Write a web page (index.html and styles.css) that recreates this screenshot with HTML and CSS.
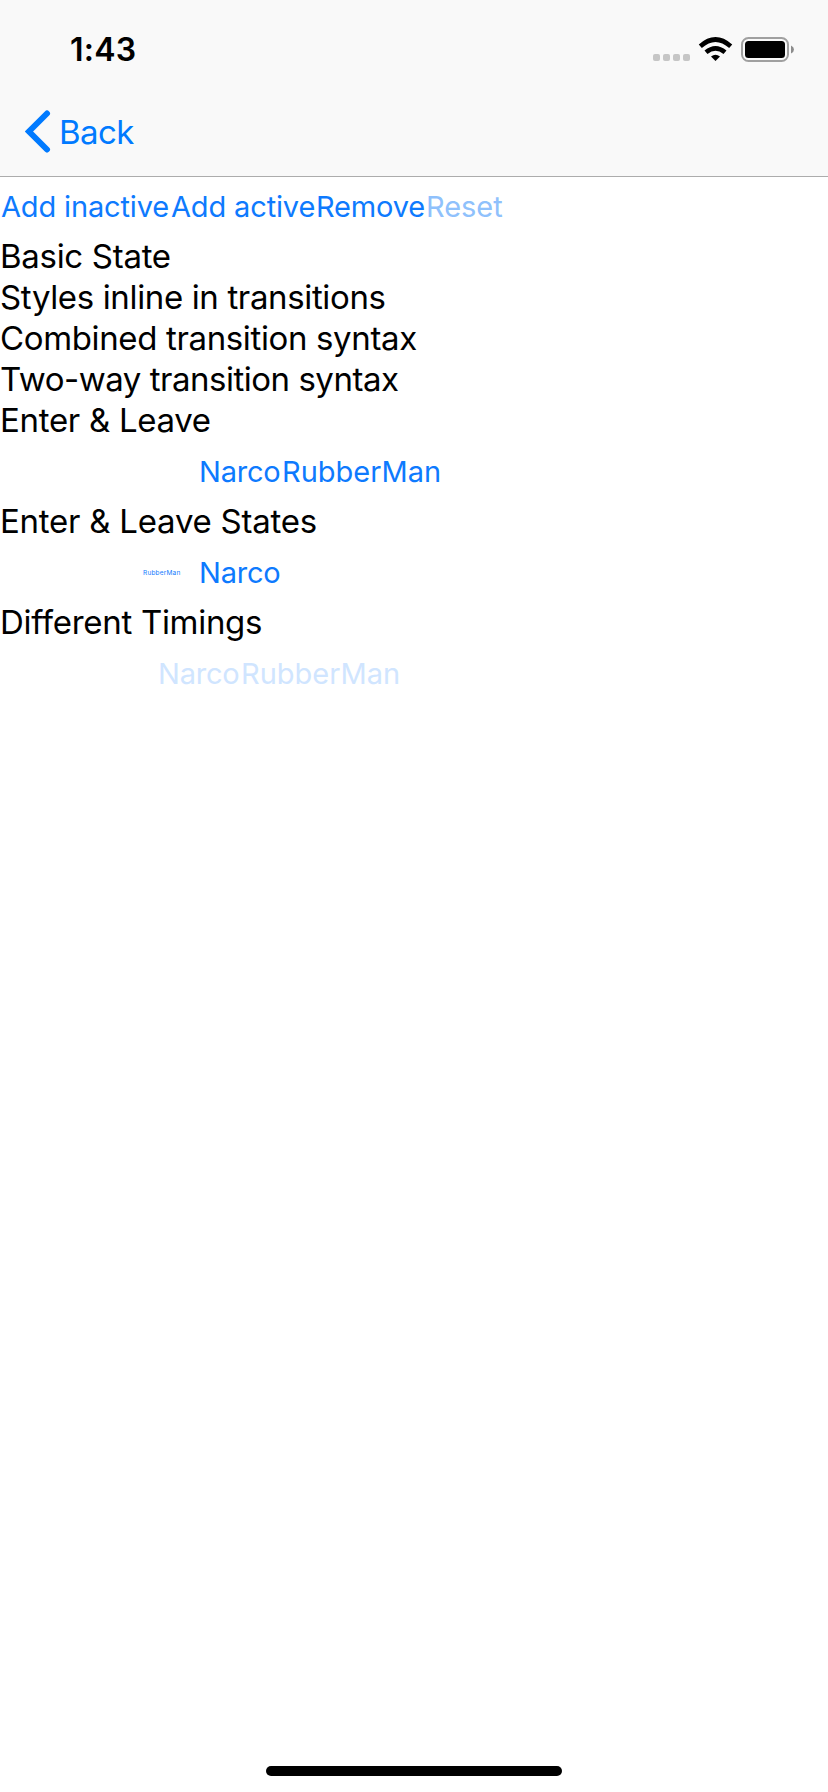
FILE: index.html
```html
<!DOCTYPE html>
<html lang="en">
<head>
<meta charset="utf-8">
<title>Transitions</title>
<link rel="stylesheet" href="styles.css">
</head>
<body>
<div class="screen">
  <header class="header">
    <div class="status">
      <span class="clock">1:43</span>
      <svg class="indicators" width="142" height="26" viewBox="652 36 142 26">
        <g fill="#c6c6c6"><rect x="653" y="54" width="7" height="7" rx="2"/><rect x="663" y="54" width="7" height="7" rx="2"/><rect x="673" y="54" width="7" height="7" rx="2"/><rect x="683" y="54" width="7" height="7" rx="2"/></g>
        <path d="M715.5 61 L711 56.6 Q715.5 53 720 56.600 Z"/>
        <g fill="none" stroke="#000" stroke-width="4.600"><path d="M706 52.300 Q715.500 44.300 725 52.300"/><path d="M700.300 46.300 Q715.500 32.700 730.700 46.300"/></g>
        <rect x="742" y="38" width="46" height="23" rx="6.500" fill="none" stroke="#a0a0a0" stroke-width="2"/>
        <rect x="745" y="41" width="40" height="17" rx="3.500"/>
        <path d="M791 45.500 Q794 47 794 49.500 T791 53.500 Z" fill="#8c8c8c"/>
      </svg>
    </div>
    <nav class="nav">
      <svg width="26" height="43" viewBox="0 0 26 43"><path d="M22 3.500 L4 21.500 L22 39.500" fill="none" stroke="#007aff" stroke-width="6" stroke-linecap="round"/></svg>
      <span class="back">Back</span>
    </nav>
  </header>
  <main class="content">
    <div class="row"><span class="btn add-inactive">Add inactive</span><span class="btn add-active">Add active</span><span class="btn remove">Remove</span><span class="btn reset">Reset</span></div>
    <div class="label">Basic State</div>
    <div class="label inline">Styles inline in transitions</div>
    <div class="label inline">Combined transition syntax</div>
    <div class="label two-way">Two-way transition syntax</div>
    <div class="label">Enter &amp; Leave</div>
    <div class="row heroes"><span class="btn narco">Narco</span><span class="btn">RubberMan</span></div>
    <div class="label enter-states">Enter &amp; Leave States</div>
    <div class="row states"><span class="btn tiny">RubberMan</span><span class="btn narco">Narco</span></div>
    <div class="label">Different Timings</div>
    <div class="row faded"><span class="btn narco">Narco</span><span class="btn">RubberMan</span></div>
  </main>
  <footer class="home"><div class="home-bar"></div></footer>
</div>
</body>
</html>
```
FILE: styles.css
```css
* { box-sizing: border-box; }
body { margin: 0; background: #fff; font-family: Inter, "Liberation Sans", sans-serif; color: #000; }
.screen { width: 828px; height: 1792px; display: flex; flex-direction: column; overflow: hidden; }
.header { height: 177px; background: #f9f9f9; border-bottom: 1px solid #acacac; }
.status { height: 88px; display: flex; justify-content: space-between; padding: 0 34px 0 70px; }
.clock { font-size: 32px; font-weight: 600; line-height: 38px; margin-top: 31px; letter-spacing: 0.2px; }
.indicators { margin-top: 36px; }
.nav { height: 88px; display: flex; padding-left: 25px; }
.nav svg { margin-top: 22px; }
.back { font-size: 33px; line-height: 40px; margin: 24px 0 0 8px; color: #007aff; letter-spacing: -0.6px; }
.content { flex: 1; margin-top: -1px; }
.label { height: 41px; line-height: 41px; font-size: 33px; white-space: nowrap; letter-spacing: -0.3px; font-variant-ligatures: none; }
.inline { letter-spacing: -0.36px; }
.two-way { letter-spacing: -0.48px; }
.enter-states { letter-spacing: -0.24px; }
.row { height: 60px; display: flex; }
.btn { font-size: 29px; line-height: 62px; color: #0e7afe; white-space: nowrap; }
.add-inactive { width: 171px; padding-left: 1px; letter-spacing: -0.15px; }
.add-active { width: 145px; letter-spacing: -0.15px; }
.remove { width: 110px; letter-spacing: -0.15px; }
.reset { color: #8fc1fc; letter-spacing: -0.05px; }
.heroes { padding-left: 199px; }
.narco { width: 83px; letter-spacing: -0.2px; }
.states { padding-left: 143px; }
.tiny { font-size: 6.5px; width: 56px; letter-spacing: 0.2px; }
.faded { padding-left: 158px; }
.faded .btn { color: #d0e5ff; }
.home { height: 26px; display: flex; justify-content: center; }
.home-bar { width: 296px; height: 10px; border-radius: 5px; background: #000; }
```
